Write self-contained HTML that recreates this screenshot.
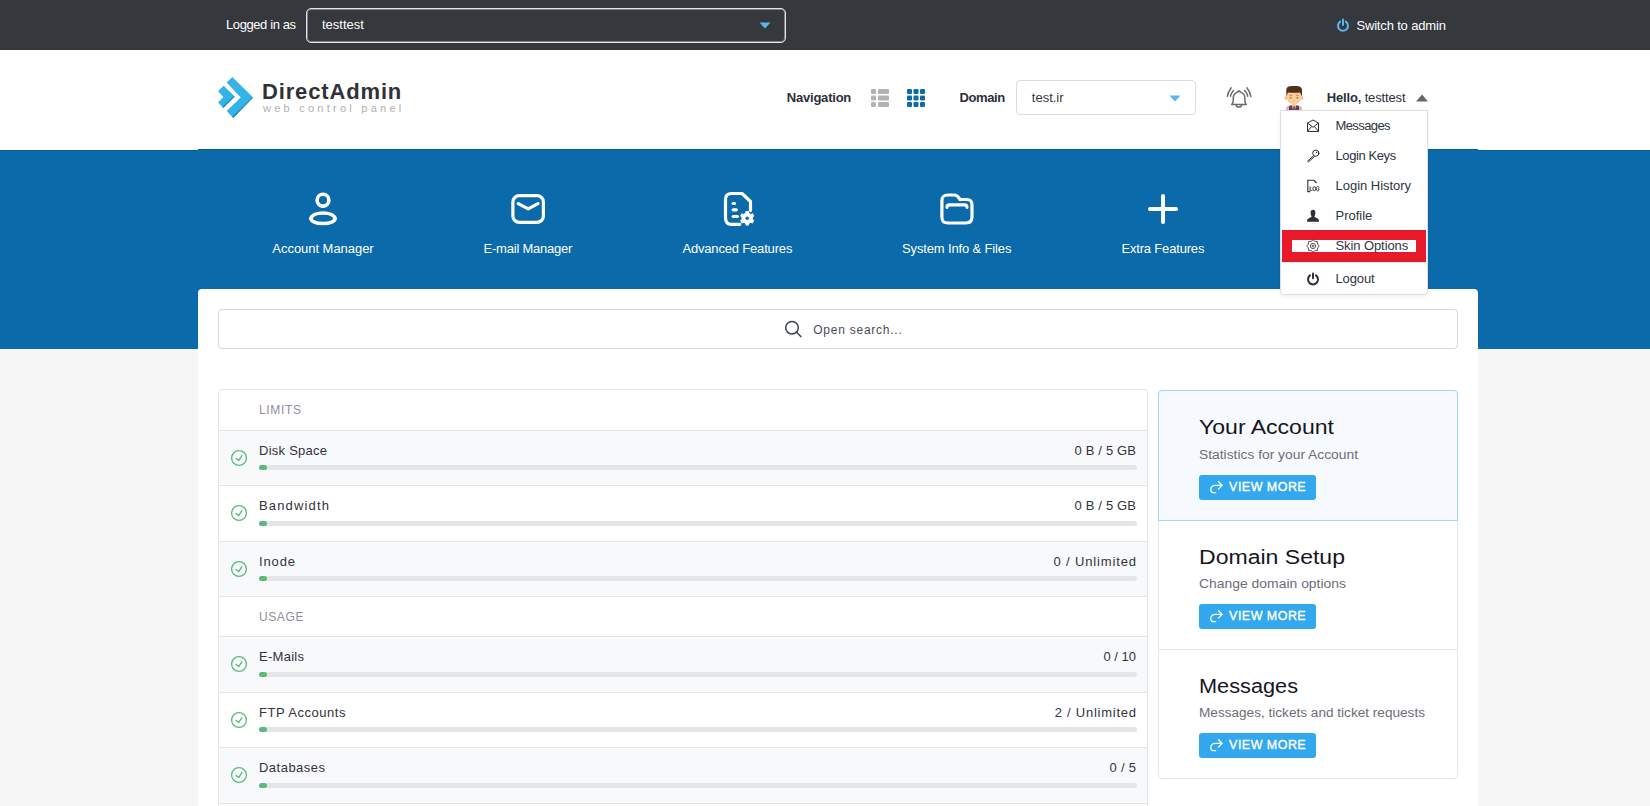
<!DOCTYPE html>
<html><head><meta charset="utf-8">
<style>
*{box-sizing:border-box;margin:0;padding:0}
html,body{width:1650px;height:806px;overflow:hidden;background:#f6f6f7;font-family:"Liberation Sans",sans-serif;position:relative}
.abs{position:absolute}
.t{position:absolute;white-space:nowrap;line-height:1}
svg{overflow:visible}
</style></head><body>
<div class="abs" style="left:0px;top:0px;width:1650px;height:50px;background:#35383d"></div>
<div class="abs" style="left:0px;top:50px;width:1650px;height:100px;background:#fff"></div>
<div class="abs" style="left:0px;top:150px;width:1650px;height:199px;background:#0b6aa9"></div>
<div class="abs" style="left:0px;top:150px;width:1650px;height:1px;background:#005fa3"></div>
<div class="abs" style="left:198px;top:149px;width:1280px;height:1px;background:#005fa3"></div>
<div class="abs" style="left:198px;top:150px;width:1280px;height:1px;background:#0b6aa9"></div>
<div class="abs" style="left:198px;top:289px;width:1280px;height:530px;background:#fff;border-radius:4px 4px 0 0"></div>
<div class="t" style="left:226px;top:18.00px;font-size:13px;color:#fff;font-weight:400;letter-spacing:-0.405px;">Logged in as</div>
<div class="abs" style="left:306px;top:8px;width:480px;height:35px;border:1px solid #e4e4e4;box-shadow:inset 0 0 0 1px rgba(220,220,222,.45);border-radius:5px"></div>
<div class="t" style="left:322px;top:18.00px;font-size:13px;color:#fff;font-weight:400;letter-spacing:-0.014px;">testtest</div>
<svg class="abs" style="left:759px;top:22px" width="12" height="7" viewBox="0 0 12 7"><path d="M0.5 0.5H11.5L6 6.5Z" fill="#5ab6ee"/></svg>
<svg class="abs" style="left:1336px;top:18px" width="14" height="14" viewBox="0 0 14 14"><path d="M4.2 3.6A5 5 0 1 0 9.8 3.6" fill="none" stroke="#5ab6ee" stroke-width="2" stroke-linecap="round"/><path d="M7 1.5V7" stroke="#5ab6ee" stroke-width="2" stroke-linecap="round"/></svg>
<div class="t" style="left:1356.4px;top:19.00px;font-size:13px;color:#fff;font-weight:400;letter-spacing:-0.161px;">Switch to admin</div>
<svg class="abs" style="left:214px;top:72px" width="44" height="50" viewBox="0 0 44 50">
<path d="M18.3 5 L39.1 25.4 L19.2 45.9 L12.7 39.1 L26.7 25.4 L12.7 10.6 Z" fill="#35b3e6"/>
<path d="M39.1 25.4 L19.2 45.9 L18.2 44.6 L37.9 25.4 Z" fill="#1c8ec4"/>
<path d="M9.6 13.7 L20.8 24.5 L9.3 36 L4 30.4 L9.3 25.1 L4 19.2 Z" fill="#35b3e6"/>
<path d="M20.8 24.5 L9.3 36 L8.6 34.8 L19.6 24.2 Z" fill="#1c8ec4"/>
</svg>
<div class="t" style="left:262px;top:81.08px;font-size:22px;color:#2f3237;font-weight:700;letter-spacing:0.85px;">DirectAdmin</div>
<div class="t" style="left:263px;top:102.99px;font-size:11px;color:#b0b0b0;font-weight:400;letter-spacing:3.25px;">web control panel</div>
<div class="t" style="left:786.8px;top:91.00px;font-size:13px;color:#2c3038;font-weight:700;letter-spacing:-0.217px;">Navigation</div>
<svg class="abs" style="left:871px;top:89px" width="18" height="18" viewBox="0 0 18 18"><rect x="0" y="0" width="5" height="5" rx="1.2" fill="#b3b3b3"/><rect x="7" y="0" width="11" height="5" rx="1.2" fill="#b3b3b3"/><rect x="0" y="6.5" width="5" height="5" rx="1.2" fill="#b3b3b3"/><rect x="7" y="6.5" width="11" height="5" rx="1.2" fill="#b3b3b3"/><rect x="0" y="13" width="5" height="5" rx="1.2" fill="#b3b3b3"/><rect x="7" y="13" width="11" height="5" rx="1.2" fill="#b3b3b3"/></svg>
<svg class="abs" style="left:907px;top:89px" width="18" height="18" viewBox="0 0 18 18"><rect x="0" y="0" width="5" height="5" rx="1.2" fill="#0c6aaa"/><rect x="6.5" y="0" width="5" height="5" rx="1.2" fill="#0c6aaa"/><rect x="13" y="0" width="5" height="5" rx="1.2" fill="#0c6aaa"/><rect x="0" y="6.5" width="5" height="5" rx="1.2" fill="#0c6aaa"/><rect x="6.5" y="6.5" width="5" height="5" rx="1.2" fill="#0c6aaa"/><rect x="13" y="6.5" width="5" height="5" rx="1.2" fill="#0c6aaa"/><rect x="0" y="13" width="5" height="5" rx="1.2" fill="#0c6aaa"/><rect x="6.5" y="13" width="5" height="5" rx="1.2" fill="#0c6aaa"/><rect x="13" y="13" width="5" height="5" rx="1.2" fill="#0c6aaa"/></svg>
<div class="t" style="left:959.4px;top:91.00px;font-size:13px;color:#2c3038;font-weight:700;letter-spacing:-0.35px;">Domain</div>
<div class="abs" style="left:1016px;top:80px;width:180px;height:35px;border:1px solid #dcdcdc;border-radius:4px"></div>
<div class="t" style="left:1031.8px;top:91.00px;font-size:13px;color:#3b3541;font-weight:400;letter-spacing:0.0px;">test.ir</div>
<svg class="abs" style="left:1169px;top:95px" width="12" height="7" viewBox="0 0 12 7"><path d="M0.5 0.5H11.5L6 6.5Z" fill="#5ab6ee"/></svg>
<svg class="abs" style="left:1215px;top:80px" width="50" height="40" viewBox="0 0 50 40">
<g fill="none" stroke="#6a6a6a" stroke-width="1.5" stroke-linecap="round" stroke-linejoin="round">
<path d="M16.7 24.5 C18 23.5 18.3 22.5 18.3 20 V17.5 C18.3 15 19.5 13.5 21.5 12.6 C22.3 12.2 23 11.4 23.9 11 C24.8 11.4 25.5 12.2 26.3 12.6 C28.5 13.5 29.8 15 29.8 17.5 V20 C29.8 22.5 30 23.5 31.2 24.5 Z"/>
<path d="M21.3 25.3 C21.6 27.6 26.2 27.6 26.6 25.3"/>
<path d="M16.1 7.9 C14.2 10.2 12.9 13.2 12.4 16.4"/><path d="M18.5 10.6 C17 12.2 15.9 14.2 15.5 16.2"/>
<path d="M32.1 7.9 C34 10.2 35.3 13.2 35.8 16.4"/><path d="M29.7 10.6 C31.2 12.2 32.3 14.2 32.7 16.2"/>
</g></svg>
<svg class="abs" style="left:1215px;top:80px" width="100" height="30" viewBox="0 0 100 30">
<path d="M71 30 V28.5 C71.5 26 74 25 79 25 C84 25 86.5 26 87.2 28.5 V30 Z" fill="#f4a3c0"/>
<path d="M74 30 V26.2 L76.6 25.3 L78 30Z" fill="#4f4646"/><path d="M84 30 V26.2 L81.4 25.3 L80 30Z" fill="#4f4646"/>
<rect x="78.2" y="26.6" width="1.6" height="3.4" fill="#4f4646"/>
<rect x="77.3" y="22.5" width="3.2" height="3" fill="#f5c48e"/>
<ellipse cx="71" cy="17.9" rx="1.4" ry="1.9" fill="#f7c08a"/><ellipse cx="87" cy="17.9" rx="1.4" ry="1.9" fill="#f7c08a"/>
<path d="M72 12 V18 C72 21.5 75 24.3 79 24.3 C83 24.3 86 21.5 86 18 V12 Z" fill="#f9cb95"/>
<path d="M71.3 15.8 V10 C71.3 7.8 73 6.5 75 6.3 C76.5 5.8 78 5.9 79 5.9 C80.5 5.9 82 5.8 83.5 6.3 C85.5 6.6 87 7.8 87 10 V15.8 L86.2 15.5 C85.9 13.5 85.5 12.6 84.8 12.4 C83 12.4 81 12.7 79 12.7 C77 12.7 75 12.4 73.4 12.4 C72.6 12.6 72.2 13.5 72 15.5 Z" fill="#52301a"/>
<circle cx="75.8" cy="17.7" r="0.75" fill="#555"/><circle cx="82.4" cy="17.7" r="0.75" fill="#555"/>
<path d="M74.6 15.4 H77" stroke="#8a5a3a" stroke-width="0.6"/><path d="M81.2 15.4 H83.6" stroke="#8a5a3a" stroke-width="0.6"/>
</svg>
<div class="t" style="left:1326.7px;top:91.00px;font-size:13px;color:#2c3038;font-weight:400;letter-spacing:-0.15px;"><b style="font-weight:700">Hello,</b> testtest</div>
<svg class="abs" style="left:1415px;top:94px" width="14" height="8" viewBox="0 0 14 8"><path d="M1 7.4H13L7 0.6Z" fill="#666"/></svg>
<svg class="abs" style="left:303px;top:180px" width="40" height="50" viewBox="0 0 40 50"><g fill="none" stroke="#fff" stroke-width="3.6" stroke-linejoin="round"><circle cx="20" cy="20.2" r="5.9"/><path d="M7.7 38.6 C10 31.2 30 31.2 32.3 38.6 C30 45.2 10 45.2 7.7 38.6 Z"/></g></svg>
<div class="t" style="left:-77.022px;width:800px;text-align:center;top:242.00px;font-size:13px;color:#fff;font-weight:400;letter-spacing:-0.043px;">Account Manager</div>
<svg class="abs" style="left:508px;top:180px" width="40" height="50" viewBox="0 0 40 50"><g fill="none" stroke="#fff" stroke-width="3.2" stroke-linecap="round" stroke-linejoin="round"><rect x="4.9" y="15.6" width="30.5" height="26.8" rx="6.5"/><path d="M10.2 23.6 L20.2 28.8 L30 23.6"/></g></svg>
<div class="t" style="left:127.886px;width:800px;text-align:center;top:242.00px;font-size:13px;color:#fff;font-weight:400;letter-spacing:-0.227px;">E-mail Manager</div>
<svg class="abs" style="left:717px;top:180px" width="40" height="50" viewBox="0 0 40 50"><g fill="none" stroke="#fff" stroke-width="3.2" stroke-linecap="round" stroke-linejoin="round">
<path d="M22.8 44.3 H14.5 C10.5 44.3 8.5 42 8.5 38 V19.5 C8.5 15.5 10.5 13.5 14.5 13.5 H25 L33.5 21.5 V30.5"/>
<path d="M16.2 23.5 H17.4"/><path d="M16.2 29.8 H19.3"/><path d="M16.2 36.5 H20.4"/></g>
<g transform="translate(30.2 38.3)"><path fill="#fff" d="M-1.6 -6.6 H1.6 L2 -4.6 L3.6 -3.7 L5.5 -4.4 L7.1 -1.6 L5.6 -0.3 V1.6 L7.1 2.9 L5.5 5.7 L3.6 5 L2 5.9 L1.6 7.8 H-1.6 L-2 5.9 L-3.6 5 L-5.5 5.7 L-7.1 2.9 L-5.6 1.6 V-0.3 L-7.1 -1.6 L-5.5 -4.4 L-3.6 -3.7 L-2 -4.6 Z" transform="translate(0 -0.6)"/><circle r="1.8" fill="#0b6aa9"/></g></svg>
<div class="t" style="left:337.314px;width:800px;text-align:center;top:242.00px;font-size:13px;color:#fff;font-weight:400;letter-spacing:-0.172px;">Advanced Features</div>
<svg class="abs" style="left:937px;top:180px" width="40" height="50" viewBox="0 0 40 50"><g fill="none" stroke="#fff" stroke-width="3.2" stroke-linecap="round" stroke-linejoin="round">
<path d="M4.9 21 C4.9 16.5 6.5 15 11 15 H17.5 C19.5 15 20.5 16 22 18 L23 19.5 H29.5 C34 19.5 35 21.5 35 25 V37 C35 41.5 33 43 29 43 H11 C6.5 43 4.9 41.5 4.9 37 Z"/>
<path d="M10 27.3 C10 25.5 11 24.8 12.5 24.8 H27.5 C29 24.8 30 25.5 30 27.3"/></g></svg>
<div class="t" style="left:556.628px;width:800px;text-align:center;top:242.00px;font-size:13px;color:#fff;font-weight:400;letter-spacing:-0.144px;">System Info &amp; Files</div>
<svg class="abs" style="left:1143px;top:180px" width="40" height="50" viewBox="0 0 40 50"><g stroke="#fff" stroke-width="4" stroke-linecap="round"><path d="M20 16V42"/><path d="M7 29H33"/></g></svg>
<div class="t" style="left:762.814px;width:800px;text-align:center;top:242.00px;font-size:13px;color:#fff;font-weight:400;letter-spacing:-0.173px;">Extra Features</div>
<div class="abs" style="left:218px;top:309px;width:1240px;height:40px;border:1px solid #d4d7de;border-radius:4px"></div>
<svg class="abs" style="left:783px;top:319px" width="20" height="20" viewBox="0 0 20 20"><g fill="none" stroke="#3b4252" stroke-width="1.5" stroke-linecap="round"><circle cx="9" cy="8.7" r="6.3"/><path d="M13.6 13.3 L17.8 17.6"/></g></svg>
<div class="t" style="left:813.2px;top:323.84px;font-size:12px;color:#474d5c;font-weight:400;letter-spacing:0.762px;">Open search...</div>
<div class="abs" style="left:218px;top:389px;width:930px;height:440px;border:1px solid #e3e5ea;border-radius:4px;background:#fff"></div>
<div class="t" style="left:259px;top:403.84px;font-size:12px;color:#908e9e;font-weight:400;letter-spacing:0.67px;">LIMITS</div>
<div class="abs" style="left:218px;top:430px;width:930px;height:1px;background:#e3e5ea"></div>
<div class="abs" style="left:219px;top:431px;width:928px;height:54px;background:#f8f9fb"></div>
<div class="t" style="left:259px;top:444.00px;font-size:13px;color:#33323d;font-weight:400;letter-spacing:0.25px;">Disk Space</div>
<div class="t" style="right:513.839px;top:444.00px;font-size:13px;color:#33323d;font-weight:400;letter-spacing:0.161px;">0 B / 5 GB</div>
<div class="abs" style="left:259px;top:465px;width:878px;height:5px;background:#e4e5e9;border-radius:3px"></div>
<div class="abs" style="left:259px;top:465px;width:8px;height:5px;background:#5cb97c;border-radius:3px"></div>
<svg class="abs" style="left:230px;top:449px" width="18" height="18" viewBox="0 0 18 18"><circle cx="9" cy="9" r="7.4" fill="none" stroke="#5cb97c" stroke-width="1.3"/><path d="M6.1 9.4 L8.7 11.6 L11.9 6.6" fill="none" stroke="#5cb97c" stroke-width="1.3" stroke-linecap="round" stroke-linejoin="round"/></svg>
<div class="abs" style="left:218px;top:485px;width:930px;height:1px;background:#e3e5ea"></div>
<div class="t" style="left:259px;top:499.00px;font-size:13px;color:#33323d;font-weight:400;letter-spacing:1.162px;">Bandwidth</div>
<div class="t" style="right:513.839px;top:499.00px;font-size:13px;color:#33323d;font-weight:400;letter-spacing:0.161px;">0 B / 5 GB</div>
<div class="abs" style="left:259px;top:521px;width:878px;height:5px;background:#e4e5e9;border-radius:3px"></div>
<div class="abs" style="left:259px;top:521px;width:8px;height:5px;background:#5cb97c;border-radius:3px"></div>
<svg class="abs" style="left:230px;top:504px" width="18" height="18" viewBox="0 0 18 18"><circle cx="9" cy="9" r="7.4" fill="none" stroke="#5cb97c" stroke-width="1.3"/><path d="M6.1 9.4 L8.7 11.6 L11.9 6.6" fill="none" stroke="#5cb97c" stroke-width="1.3" stroke-linecap="round" stroke-linejoin="round"/></svg>
<div class="abs" style="left:218px;top:541px;width:930px;height:1px;background:#e3e5ea"></div>
<div class="abs" style="left:219px;top:542px;width:928px;height:54px;background:#f8f9fb"></div>
<div class="t" style="left:259px;top:555.00px;font-size:13px;color:#33323d;font-weight:400;letter-spacing:0.863px;">Inode</div>
<div class="t" style="right:513.138px;top:555.00px;font-size:13px;color:#33323d;font-weight:400;letter-spacing:0.862px;">0 / Unlimited</div>
<div class="abs" style="left:259px;top:576px;width:878px;height:5px;background:#e4e5e9;border-radius:3px"></div>
<div class="abs" style="left:259px;top:576px;width:8px;height:5px;background:#5cb97c;border-radius:3px"></div>
<svg class="abs" style="left:230px;top:560px" width="18" height="18" viewBox="0 0 18 18"><circle cx="9" cy="9" r="7.4" fill="none" stroke="#5cb97c" stroke-width="1.3"/><path d="M6.1 9.4 L8.7 11.6 L11.9 6.6" fill="none" stroke="#5cb97c" stroke-width="1.3" stroke-linecap="round" stroke-linejoin="round"/></svg>
<div class="abs" style="left:218px;top:596px;width:930px;height:1px;background:#e3e5ea"></div>
<div class="t" style="left:259px;top:610.84px;font-size:12px;color:#908e9e;font-weight:400;letter-spacing:0.6px;">USAGE</div>
<div class="abs" style="left:218px;top:636px;width:930px;height:1px;background:#e3e5ea"></div>
<div class="abs" style="left:219px;top:637px;width:928px;height:55px;background:#f8f9fb"></div>
<div class="t" style="left:259px;top:650.00px;font-size:13px;color:#33323d;font-weight:400;letter-spacing:0.275px;">E-Mails</div>
<div class="t" style="right:514.000px;top:650.00px;font-size:13px;color:#33323d;font-weight:400;letter-spacing:0.0px;">0 / 10</div>
<div class="abs" style="left:259px;top:672px;width:878px;height:5px;background:#e4e5e9;border-radius:3px"></div>
<div class="abs" style="left:259px;top:672px;width:8px;height:5px;background:#5cb97c;border-radius:3px"></div>
<svg class="abs" style="left:230px;top:655px" width="18" height="18" viewBox="0 0 18 18"><circle cx="9" cy="9" r="7.4" fill="none" stroke="#5cb97c" stroke-width="1.3"/><path d="M6.1 9.4 L8.7 11.6 L11.9 6.6" fill="none" stroke="#5cb97c" stroke-width="1.3" stroke-linecap="round" stroke-linejoin="round"/></svg>
<div class="abs" style="left:218px;top:692px;width:930px;height:1px;background:#e3e5ea"></div>
<div class="t" style="left:259px;top:706.00px;font-size:13px;color:#33323d;font-weight:400;letter-spacing:0.518px;">FTP Accounts</div>
<div class="t" style="right:513.246px;top:706.00px;font-size:13px;color:#33323d;font-weight:400;letter-spacing:0.754px;">2 / Unlimited</div>
<div class="abs" style="left:259px;top:727px;width:878px;height:5px;background:#e4e5e9;border-radius:3px"></div>
<div class="abs" style="left:259px;top:727px;width:8px;height:5px;background:#5cb97c;border-radius:3px"></div>
<svg class="abs" style="left:230px;top:711px" width="18" height="18" viewBox="0 0 18 18"><circle cx="9" cy="9" r="7.4" fill="none" stroke="#5cb97c" stroke-width="1.3"/><path d="M6.1 9.4 L8.7 11.6 L11.9 6.6" fill="none" stroke="#5cb97c" stroke-width="1.3" stroke-linecap="round" stroke-linejoin="round"/></svg>
<div class="abs" style="left:218px;top:747px;width:930px;height:1px;background:#e3e5ea"></div>
<div class="abs" style="left:219px;top:748px;width:928px;height:55px;background:#f8f9fb"></div>
<div class="t" style="left:259px;top:761.00px;font-size:13px;color:#33323d;font-weight:400;letter-spacing:0.481px;">Databases</div>
<div class="t" style="right:513.725px;top:761.00px;font-size:13px;color:#33323d;font-weight:400;letter-spacing:0.275px;">0 / 5</div>
<div class="abs" style="left:259px;top:783px;width:878px;height:5px;background:#e4e5e9;border-radius:3px"></div>
<div class="abs" style="left:259px;top:783px;width:8px;height:5px;background:#5cb97c;border-radius:3px"></div>
<svg class="abs" style="left:230px;top:766px" width="18" height="18" viewBox="0 0 18 18"><circle cx="9" cy="9" r="7.4" fill="none" stroke="#5cb97c" stroke-width="1.3"/><path d="M6.1 9.4 L8.7 11.6 L11.9 6.6" fill="none" stroke="#5cb97c" stroke-width="1.3" stroke-linecap="round" stroke-linejoin="round"/></svg>
<div class="abs" style="left:218px;top:803px;width:930px;height:1px;background:#e3e5ea"></div>
<div class="t" style="left:259px;top:817.00px;font-size:13px;color:#33323d;font-weight:400;letter-spacing:1.45px;">Domains</div>
<div class="t" style="right:513.825px;top:817.00px;font-size:13px;color:#33323d;font-weight:400;letter-spacing:0.175px;">0 / 1</div>
<div class="abs" style="left:259px;top:838px;width:878px;height:5px;background:#e4e5e9;border-radius:3px"></div>
<div class="abs" style="left:259px;top:838px;width:8px;height:5px;background:#5cb97c;border-radius:3px"></div>
<svg class="abs" style="left:230px;top:822px" width="18" height="18" viewBox="0 0 18 18"><circle cx="9" cy="9" r="7.4" fill="none" stroke="#5cb97c" stroke-width="1.3"/><path d="M6.1 9.4 L8.7 11.6 L11.9 6.6" fill="none" stroke="#5cb97c" stroke-width="1.3" stroke-linecap="round" stroke-linejoin="round"/></svg>
<div class="abs" style="left:218px;top:858px;width:930px;height:1px;background:#e3e5ea"></div>
<div class="abs" style="left:1158px;top:390px;width:300px;height:389px;border:1px solid #e3e5ea;border-radius:4px;background:#fff"></div>
<div class="abs" style="left:1158px;top:390px;width:300px;height:131px;border:1px solid #a8d7f3;border-radius:4px 4px 0 0;background:#f6fafe"></div>
<div class="abs" style="left:1158px;top:649px;width:300px;height:1px;background:#e3e5ea"></div>
<div class="t" style="left:1199.3px;top:417.07px;font-size:20px;color:#16161f;font-weight:400;letter-spacing:0px;transform:scaleX(1.1524);transform-origin:0 0;">Your Account</div>
<div class="t" style="left:1199.3px;top:448.84px;font-size:12px;color:#6d6c77;font-weight:400;letter-spacing:0px;transform:scaleX(1.1518);transform-origin:0 0;">Statistics for your Account</div>
<div class="abs" style="left:1199px;top:475px;width:117px;height:25px;background:#33a8ee;border-radius:3px"></div>
<svg class="abs" style="left:1199px;top:475px" width="30" height="25" viewBox="0 0 30 25"><g fill="none" stroke="#fff" stroke-width="1.3" stroke-linecap="round" stroke-linejoin="round"><path d="M23 10.4 H16.6 C13.6 10.4 11.8 12.2 11.8 14.4 C11.8 16.4 13.4 17.7 15.2 17.7 H16.6"/><path d="M19.6 6.8 L23.1 10.4 L19.4 14.1"/></g></svg>
<div class="t" style="left:1229.1px;top:481.22px;font-size:12.5px;color:#fff;font-weight:400;letter-spacing:0.462px;-webkit-text-stroke:0.35px #fff;">VIEW MORE</div>
<div class="t" style="left:1199.3px;top:546.57px;font-size:20px;color:#16161f;font-weight:400;letter-spacing:0px;transform:scaleX(1.1519);transform-origin:0 0;">Domain Setup</div>
<div class="t" style="left:1199.3px;top:577.84px;font-size:12px;color:#6d6c77;font-weight:400;letter-spacing:0px;transform:scaleX(1.1598);transform-origin:0 0;">Change domain options</div>
<div class="abs" style="left:1199px;top:604px;width:117px;height:25px;background:#33a8ee;border-radius:3px"></div>
<svg class="abs" style="left:1199px;top:604px" width="30" height="25" viewBox="0 0 30 25"><g fill="none" stroke="#fff" stroke-width="1.3" stroke-linecap="round" stroke-linejoin="round"><path d="M23 10.4 H16.6 C13.6 10.4 11.8 12.2 11.8 14.4 C11.8 16.4 13.4 17.7 15.2 17.7 H16.6"/><path d="M19.6 6.8 L23.1 10.4 L19.4 14.1"/></g></svg>
<div class="t" style="left:1229.1px;top:610.22px;font-size:12.5px;color:#fff;font-weight:400;letter-spacing:0.462px;-webkit-text-stroke:0.35px #fff;">VIEW MORE</div>
<div class="t" style="left:1199.3px;top:676.07px;font-size:20px;color:#16161f;font-weight:400;letter-spacing:0px;transform:scaleX(1.0861);transform-origin:0 0;">Messages</div>
<div class="t" style="left:1199.3px;top:706.84px;font-size:12px;color:#6d6c77;font-weight:400;letter-spacing:0px;transform:scaleX(1.1331);transform-origin:0 0;">Messages, tickets and ticket requests</div>
<div class="abs" style="left:1199px;top:733px;width:117px;height:25px;background:#33a8ee;border-radius:3px"></div>
<svg class="abs" style="left:1199px;top:733px" width="30" height="25" viewBox="0 0 30 25"><g fill="none" stroke="#fff" stroke-width="1.3" stroke-linecap="round" stroke-linejoin="round"><path d="M23 10.4 H16.6 C13.6 10.4 11.8 12.2 11.8 14.4 C11.8 16.4 13.4 17.7 15.2 17.7 H16.6"/><path d="M19.6 6.8 L23.1 10.4 L19.4 14.1"/></g></svg>
<div class="t" style="left:1229.1px;top:739.22px;font-size:12.5px;color:#fff;font-weight:400;letter-spacing:0.462px;-webkit-text-stroke:0.35px #fff;">VIEW MORE</div>
<div class="abs" style="left:1280px;top:110px;width:148px;height:185px;background:#fff;border:1px solid #dedede;border-radius:0 0 4px 4px;box-shadow:0 2px 4px rgba(0,0,0,.06)"></div>
<div class="abs" style="left:1281px;top:262px;width:146px;height:1px;background:#ececec"></div>
<div class="abs" style="left:1282px;top:230px;width:144px;height:32px;background:#fff;border:10px solid #e8192a"></div>
<svg class="abs" style="left:1306px;top:119px" width="14" height="14" viewBox="0 0 14 14"><g fill="none" stroke="#2c3038" stroke-width="1" stroke-linejoin="round"><path d="M1.5 4 L7 1 L12.5 4 V12.5 H1.5 Z"/><path d="M1.5 4 L7 8.3 L12.5 4"/><path d="M1.5 12.5 L5.6 7.4"/><path d="M12.5 12.5 L8.4 7.4"/></g></svg>
<svg class="abs" style="left:1306px;top:149px" width="14" height="14" viewBox="0 0 14 14"><g fill="none" stroke="#2c3038" stroke-width="1" stroke-linecap="round" stroke-linejoin="round"><circle cx="9.8" cy="4.2" r="3.1"/><path d="M7.6 6.6 L1.6 12.2 L2.4 12.9 L8.6 7.5"/></g><circle cx="10.6" cy="3.4" r="0.6" fill="#2c3038"/></svg>
<svg class="abs" style="left:1306px;top:179px" width="14" height="14" viewBox="0 0 14 14"><g fill="none" stroke="#2c3038" stroke-width="1.1"><path d="M4.2 12.6 H1.8 V1.3 H8 L10.6 4"/></g><path fill="#2c3038" d="M3.6 7.6 H4.6 V10.9 H6.4 V11.8 H3.6Z"/><ellipse cx="8.3" cy="9.7" rx="1.45" ry="2.05" fill="none" stroke="#2c3038" stroke-width="0.95"/><path d="M13 8.6 C12.8 7.9 12.4 7.5 11.7 7.5 C10.8 7.5 10.2 8.4 10.2 9.7 C10.2 11 10.8 11.9 11.7 11.9 C12.5 11.9 13 11.3 13 10.4 V9.8 H11.8" fill="none" stroke="#2c3038" stroke-width="0.95"/></svg>
<svg class="abs" style="left:1306px;top:209px" width="14" height="14" viewBox="0 0 14 14"><path fill="#2c3038" d="M7 0.8 C8.8 0.8 9.6 2.3 9.4 4.3 C9.2 6 8.6 7 8.4 7.6 C8.6 8.2 9.6 8.6 11 9.2 C12.5 9.8 13 10.8 13 12.8 H1 C1 10.8 1.5 9.8 3 9.2 C4.4 8.6 5.4 8.2 5.6 7.6 C5.4 7 4.8 6 4.6 4.3 C4.4 2.3 5.2 0.8 7 0.8Z"/></svg>
<svg class="abs" style="left:1306px;top:239px" width="14" height="14" viewBox="0 0 14 14"><g fill="none" stroke="#2c3038" stroke-width="0.8" stroke-linejoin="round"><path d="M13.20 7.00 L11.62 8.91 L11.38 11.38 L8.91 11.62 L7.00 13.20 L5.09 11.62 L2.62 11.38 L2.38 8.91 L0.80 7.00 L2.38 5.09 L2.62 2.62 L5.09 2.38 L7.00 0.80 L8.91 2.38 L11.38 2.62 L11.62 5.09Z"/><circle cx="7" cy="7" r="2.6"/><circle cx="7" cy="7" r="0.9"/></g></svg>
<svg class="abs" style="left:1306px;top:272px" width="14" height="14" viewBox="0 0 14 14"><g fill="none" stroke="#2c3038" stroke-width="2" stroke-linecap="round"><path d="M4 3.4 A5 5 0 1 0 10 3.4"/><path d="M7 1.6 V6.2"/></g></svg>
<div class="t" style="left:1335.5px;top:119.00px;font-size:13px;color:#2f3542;font-weight:400;letter-spacing:-0.607px;">Messages</div>
<div class="t" style="left:1335.5px;top:149.00px;font-size:13px;color:#2f3542;font-weight:400;letter-spacing:-0.4px;">Login Keys</div>
<div class="t" style="left:1335.5px;top:179.00px;font-size:13px;color:#2f3542;font-weight:400;letter-spacing:-0.021px;">Login History</div>
<div class="t" style="left:1335.5px;top:209.00px;font-size:13px;color:#2f3542;font-weight:400;letter-spacing:-0.008px;">Profile</div>
<div class="t" style="left:1335.5px;top:239.00px;font-size:13px;color:#2f3542;font-weight:400;letter-spacing:-0.091px;">Skin Options</div>
<div class="t" style="left:1335.5px;top:271.50px;font-size:13px;color:#2f3542;font-weight:400;letter-spacing:-0.13px;">Logout</div>
</body></html>
